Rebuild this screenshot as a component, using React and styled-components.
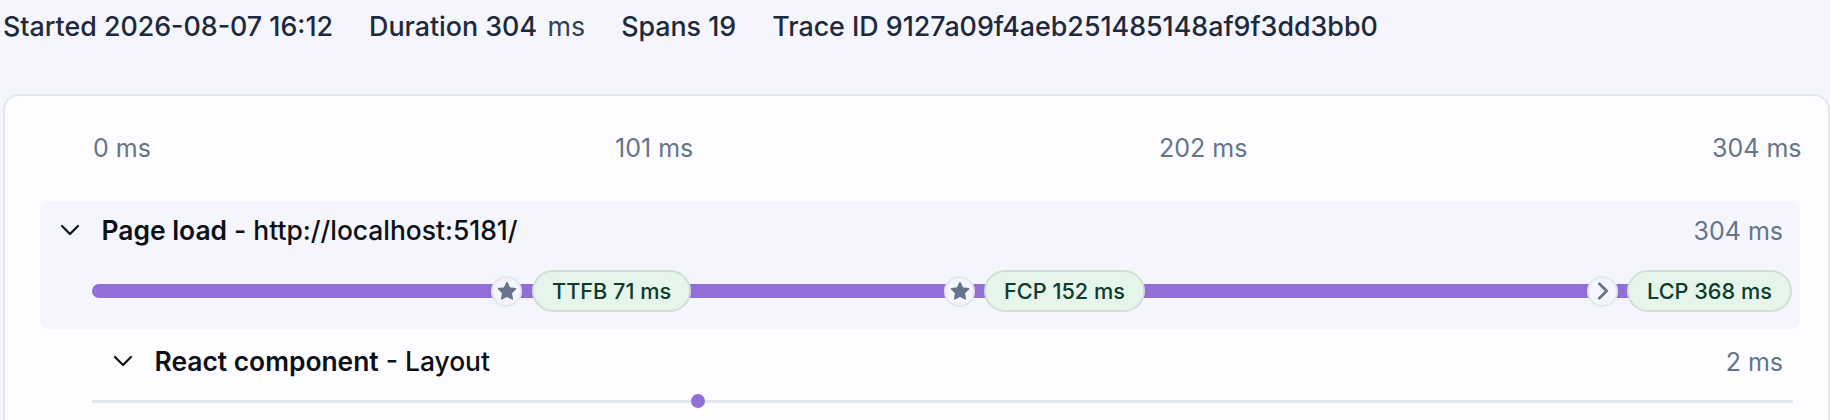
import React from 'react'
import styled, { createGlobalStyle } from 'styled-components'

const Global = createGlobalStyle`
    html, body {
        margin: 0;
        padding: 0;
        background: #f4f5fd;
    }
    body {
        font-family: Inter, "Liberation Sans", sans-serif;
    }
`

const Page = styled.div`
    width: 1830px;
    height: 420px;
    overflow: hidden;
    background: #f4f5fd;
    padding-left: 3px;
    box-sizing: border-box;
`

const Summary = styled.div`
    display: flex;
    gap: 36px;
    height: 94px;
    padding-top: 11px;
    box-sizing: border-box;
    font-size: 26.8px;
    line-height: 30px;
    font-weight: 500;
    color: #1e293b;
`

const Unit = styled.span`
    margin-left: 3px;
    font-weight: 400;
    color: #334155;
`

const Card = styled.div`
    box-sizing: border-box;
    height: 360px;
    padding-top: 37px;
    background: #fdfdff;
    border: 2px solid #e2e8f0;
    border-radius: 16px;
`

const Axis = styled.div`
    display: grid;
    grid-template-columns: 522px 544px 553px auto;
    margin: 0 0 38px 88px;
    font-size: 25px;
    line-height: 30px;
    color: #64748b;
`

const Rows = styled.div`
    width: 1760px;
    margin-left: 35px;
`

const Row = styled.div`
    background: ${p => (p.$active ? '#f4f5fd' : 'transparent')};
    border-radius: 8px;
    padding: ${p => (p.$active ? '13px 0 17px' : '16px 0 0')};
`

const RowHead = styled.div`
    display: flex;
    align-items: center;
    height: 32px;
    padding-left: ${p => p.$indent}px;
    padding-right: 17px;
    margin-bottom: ${p => (p.$active ? '24px' : '17px')};
    font-size: 26.4px;
    color: #0b0f17;
`

const Chevron = styled.svg`
    width: 20px;
    height: 12px;
    margin-right: 21.5px;
    fill: none;
    stroke: #0b0f17;
    stroke-width: 2.2;
    stroke-linecap: round;
    stroke-linejoin: round;
`

const Name = styled.span`
    font-weight: 600;
`

const Detail = styled.span`
    font-weight: 500;
    white-space: pre;
`

const Took = styled.span`
    margin-left: auto;
    margin-top: 2px;
    font-size: 25px;
    color: #64748b;
`

const Track = styled.div`
    position: relative;
    display: flex;
    align-items: center;
    height: ${p => (p.$tall ? '42px' : '14px')};
    margin: 0 7px 0 52px;
`

const Bar = styled.div`
    width: 1560px;
    height: 14px;
    border-radius: 7px;
    background: #916fd6;
`

const Line = styled.div`
    width: 100%;
    height: 3px;
    background: #e2e8f0;
`

const Dot = styled.div`
    position: absolute;
    left: ${p => p.$left}px;
    top: 0;
    width: 14px;
    height: 14px;
    border-radius: 50%;
    background: #916fd6;
`

const Mark = styled.div`
    position: absolute;
    left: ${p => p.$left}px;
    top: 0;
    display: flex;
    align-items: center;
    gap: ${p => p.$gap}px;
    height: 42px;
`

const Ring = styled.div`
    display: flex;
    align-items: center;
    justify-content: center;
    box-sizing: border-box;
    width: 31px;
    height: 31px;
    border-radius: 50%;
    background: #f4f5fd;
    border: 2px solid #e2e8f0;
`

const Glyph = styled.svg`
    width: 22px;
    height: 22px;
    fill: ${p => (p.$line ? 'none' : '#64748b')};
    stroke: #64748b;
    stroke-width: ${p => (p.$line ? 3 : 1.5)};
    stroke-linecap: round;
    stroke-linejoin: round;
`

const Pill = styled.div`
    display: flex;
    align-items: center;
    box-sizing: border-box;
    height: 42px;
    padding: 0 18px;
    border-radius: 21px;
    background: #e6f5e9;
    border: 2px solid #cfe0d3;
    font-size: 21.7px;
    font-weight: 500;
    color: #0e3b2e;
    white-space: nowrap;
`

const StarIcon = () => (
    <Glyph viewBox="0 0 24 24">
        <path d="M12 2.8l2.9 5.9 6.5.9-4.7 4.6 1.1 6.5-5.8-3.1-5.8 3.1 1.1-6.5-4.7-4.6 6.5-.9z" />
    </Glyph>
)

const NextIcon = () => (
    <Glyph $line viewBox="0 0 24 24">
        <path d="M8 4l8 8-8 8" />
    </Glyph>
)

const marks = [
    { left: 399, gap: 10, label: 'TTFB 71 ms', icon: <StarIcon /> },
    { left: 852, gap: 9, label: 'FCP 152 ms', icon: <StarIcon /> },
    { left: 1495, gap: 9, label: 'LCP 368 ms', icon: <NextIcon /> },
]

const Toggle = () => (
    <Chevron viewBox="0 0 20 12">
        <path d="M2 2l8 8 8-8" />
    </Chevron>
)

export default function App() {
    return (
        <Page>
            <Global />
            <Summary>
                <span>Started 2026-08-07 16:12</span>
                <span>Duration 304<Unit> ms</Unit></span>
                <span>Spans 19</span>
                <span>Trace ID 9127a09f4aeb251485148af9f3dd3bb0</span>
            </Summary>
            <Card>
                <Axis>
                    <span>0 ms</span>
                    <span>101 ms</span>
                    <span>202 ms</span>
                    <span>304 ms</span>
                </Axis>
                <Rows>
                    <Row $active>
                        <RowHead $active $indent={20}>
                            <Toggle />
                            <Name>Page load</Name>
                            <Detail> - http://localhost:5181/</Detail>
                            <Took>304 ms</Took>
                        </RowHead>
                        <Track $tall>
                            <Bar />
                            {marks.map(m => (
                                <Mark key={m.label} $left={m.left} $gap={m.gap}>
                                    <Ring>{m.icon}</Ring>
                                    <Pill>{m.label}</Pill>
                                </Mark>
                            ))}
                        </Track>
                    </Row>
                    <Row>
                        <RowHead $indent={73}>
                            <Toggle />
                            <Name>React component</Name>
                            <Detail> - Layout</Detail>
                            <Took>2 ms</Took>
                        </RowHead>
                        <Track>
                            <Line />
                            <Dot $left={599} />
                        </Track>
                    </Row>
                </Rows>
            </Card>
        </Page>
    )
}
